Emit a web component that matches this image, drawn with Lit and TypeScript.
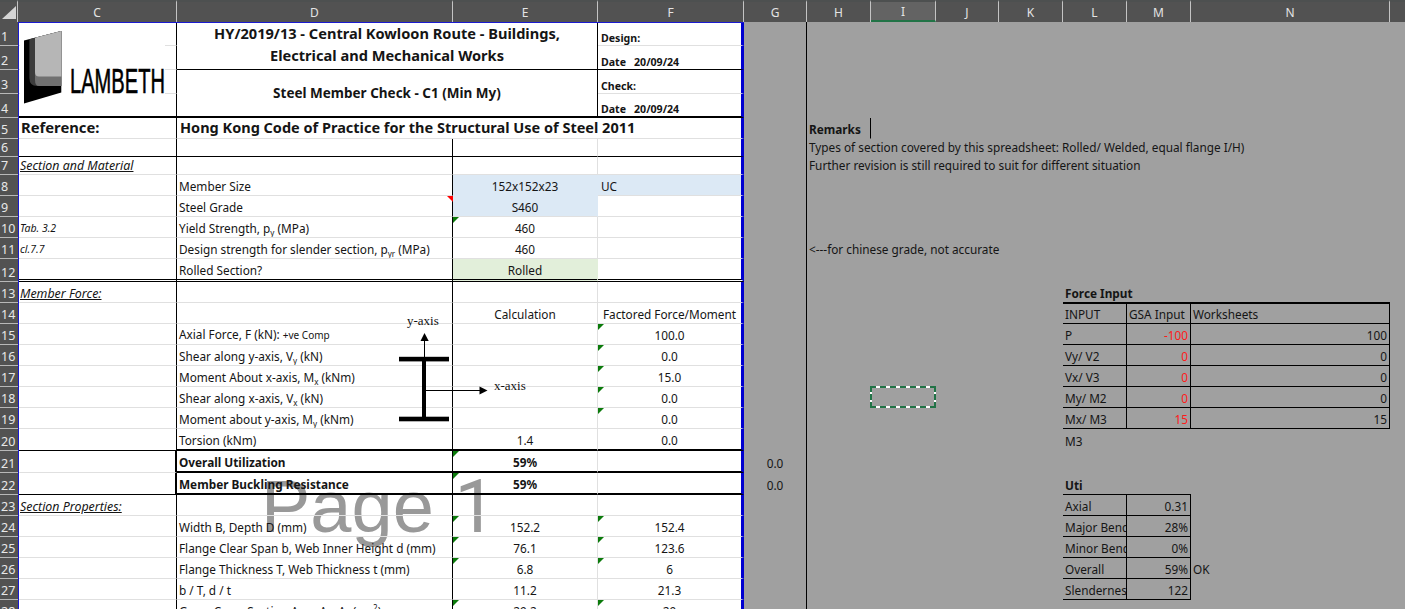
import {LitElement, css, html, nothing} from 'lit';
import {customElement} from 'lit/decorators.js';
import {classMap} from 'lit/directives/class-map.js';

const COLUMNS = ['C', 'D', 'E', 'F', 'G', 'H', 'I', 'J', 'K', 'L', 'M', 'N', ''];
const ROW_HEIGHTS = [24, 24, 24, 24, 21, 18, 18, 21, 21, 21, 21, 23, 21, 21, 21, 21, 21, 21, 21, 22, 22, 22, 21, 21, 21, 21, 21, 21];

// grid column line of a sheet column, the row header takes the first one
const colIndex = (col: string) => COLUMNS.indexOf(col) + 2;

interface Cell {
  col: string;
  row: number;
  colSpan?: number;
  rowSpan?: number;
  text?: unknown;
  cls?: string;
}

const sub = (t: string) => html`<sub>${t}</sub>`;

// borders of the print area, everything else keeps the light gridline
function printBorders(col: string, row: number): string {
  const out: string[] = [];
  if (col === 'C' || col === 'D') out.push('rb');
  if (col === 'F') out.push('blue');
  if (row === 6) out.push('bb');
  if (row === 12) out.push('dbl');
  if (col === 'C') {
    if (row === 4) out.push('bb2');
    if (row === 20 || row === 22) out.push('bb');
    if (row === 21 || row === 22) out.push('rb2');
  } else {
    if (row === 20 || row === 21 || row === 22) out.push('bb2');
  }
  if (col === 'F' && row === 2) out.push('bb');
  if (col === 'F' && row === 4) out.push('bb2');
  return out.join(' ');
}

const LABELS: Record<number, unknown> = {
  8: 'Member Size',
  9: 'Steel Grade',
  10: html`Yield Strength, p${sub('y')} (MPa)`,
  11: html`Design strength for slender section, p${sub('yr')} (MPa)`,
  12: 'Rolled Section?',
  15: html`Axial Force, F (kN): <small>+ve Comp</small>`,
  16: html`Shear along y-axis, V${sub('y')} (kN)`,
  17: html`Moment About x-axis, M${sub('x')} (kNm)`,
  18: html`Shear along x-axis, V${sub('x')} (kN)`,
  19: html`Moment about y-axis, M${sub('y')} (kNm)`,
  20: 'Torsion (kNm)',
  21: html`<b>Overall Utilization</b>`,
  22: html`<b>Member Buckling Resistance</b>`,
  24: 'Width B, Depth D (mm)',
  25: 'Flange Clear Span b, Web Inner Height d (mm)',
  26: 'Flange Thickness T, Web Thickness t (mm)',
  27: 'b / T, d / t',
  28: html`Gross Cross Section Area A${sub('g')}, A${sub('v')} (cm<sup>2</sup>)`,
};

const REFS: Record<number, unknown> = {
  7: html`<i class="sect">Section and Material</i>`,
  10: html`<i class="ref">Tab. 3.2</i>`,
  11: html`<i class="ref">cl.7.7</i>`,
  13: html`<i class="sect">Member Force:</i>`,
  23: html`<i class="sect">Section Properties:</i>`,
};

const E_VALUES: Record<number, unknown> = {
  8: '152x152x23', 9: 'S460', 10: '460', 11: '460', 12: 'Rolled',
  14: 'Calculation', 20: '1.4',
  21: html`<b>59%</b>`, 22: html`<b>59%</b>`,
  24: '152.2', 25: '76.1', 26: '6.8', 27: '11.2', 28: '29.2',
};

const F_VALUES: Record<number, unknown> = {
  14: 'Factored Force/Moment', 15: '100.0', 16: '0.0', 17: '15.0', 18: '0.0', 19: '0.0', 20: '0.0',
  24: '152.4', 25: '123.6', 26: '6', 27: '21.3', 28: '29',
};

const E_TRI = [10, 21, 22, 24, 25, 26, 28];
const F_TRI = [15, 16, 17, 18, 19, 24, 25, 26, 28];

function buildPrintCells(): Cell[] {
  const cells: Cell[] = [
    {col: 'D', row: 1, colSpan: 2, rowSpan: 2, cls: 'title bb rb', text: html`HY/2019/13 - Central Kowloon Route - Buildings,<br />Electrical and Mechanical Works`},
    {col: 'D', row: 3, colSpan: 2, rowSpan: 2, cls: 'subtitle bb2 rb', text: 'Steel Member Check - C1 (Min My)'},
    {col: 'F', row: 1, cls: 'small-bold', text: 'Design:'},
    {col: 'F', row: 2, cls: 'small-bold', text: html`Date<span class="date">20/09/24</span>`},
    {col: 'F', row: 3, cls: 'small-bold', text: 'Check:'},
    {col: 'F', row: 4, cls: 'small-bold', text: html`Date<span class="date">20/09/24</span>`},
    {col: 'D', row: 5, colSpan: 3, cls: 'heading blue', text: 'Hong Kong Code of Practice for the Structural Use of Steel 2011'},
  ];
  for (let row = 1; row <= 28; row++) {
    cells.push({col: 'C', row, text: row === 5 ? 'Reference:' : REFS[row], cls: row === 5 ? 'reference' : ''});
    if (row > 5) {
      cells.push({col: 'D', row, text: LABELS[row], cls: 'label'});
      const fill = row === 8 || row === 9 ? 'fill-blue' : row === 12 ? 'fill-green' : '';
      cells.push({col: 'E', row, text: E_VALUES[row], cls: `c ${fill} ${E_TRI.includes(row) ? 'tri' : ''} ${row === 8 ? 'no-bb' : ''}`});
      cells.push({col: 'F', row, text: row === 8 ? 'UC' : F_VALUES[row], cls: `${row === 8 ? 'fill-blue pad' : 'c'} ${F_TRI.includes(row) ? 'tri' : ''}`});
    }
  }
  return cells;
}

const sideCell = (col: string, row: number, text: unknown, cls = ''): Cell => ({col, row, text, cls: `side ${cls}`});

const FORCE_ROWS = [
  ['P', '-100', '100'],
  ['Vy/ V2', '0', '0'],
  ['Vx/ V3', '0', '0'],
  ['My/ M2', '0', '0'],
  ['Mx/ M3', '15', '15'],
];

const UTI_ROWS = [
  ['Axial', '0.31'],
  ['Major Bending', '28%'],
  ['Minor Bending', '0%'],
  ['Overall', '59%'],
  ['Slenderness', '122'],
];

function buildSideCells(): Cell[] {
  const cells: Cell[] = [
    sideCell('H', 5, html`<b>Remarks</b>`, 'rb'),
    {...sideCell('H', 6, 'Types of section covered by this spreadsheet: Rolled/ Welded, equal flange I/H)'), colSpan: 7},
    {...sideCell('H', 7, 'Further revision is still required to suit for different situation'), colSpan: 7},
    {...sideCell('H', 11, '<---for chinese grade, not accurate'), colSpan: 5},
    sideCell('G', 21, '0.0', 'c'),
    sideCell('G', 22, '0.0', 'c'),
    {...sideCell('L', 13, html`<b>Force Input</b>`), colSpan: 2},
    sideCell('L', 14, 'INPUT', 'box top-edge'),
    sideCell('M', 14, 'GSA Input', 'box top-edge'),
    sideCell('N', 14, 'Worksheets', 'box top-edge'),
    sideCell('L', 20, 'M3'),
    sideCell('L', 22, html`<b>Uti</b>`),
    sideCell('N', 26, 'OK'),
  ];
  FORCE_ROWS.forEach(([name, gsa, sheet], i) => {
    cells.push(sideCell('L', 15 + i, name, 'box'));
    cells.push(sideCell('M', 15 + i, gsa, 'box r red'));
    cells.push(sideCell('N', 15 + i, sheet, 'box r'));
  });
  UTI_ROWS.forEach(([name, value], i) => {
    cells.push(sideCell('L', 23 + i, name, 'box'));
    cells.push(sideCell('M', 23 + i, value, 'box r'));
  });
  return cells;
}

@customElement('app-root')
export class AppRoot extends LitElement {
  static styles = css`
    :host {
      display: block;
      width: 1405px;
      height: 609px;
      overflow: hidden;
      font-family: 'Noto Sans', 'Liberation Sans', sans-serif;
      font-size: 11.8px;
      color: #151515;
    }

    .sheet {
      position: relative;
      display: grid;
      grid-template-columns: 18px 159px 276px 145px 146px 63px 64px 65px 63px 64px 64px 64px 199px 1fr;
      background: #a0a0a0;
      width: 1405px;
    }

    .col-head,
    .corner {
      box-sizing: border-box;
      display: flex;
      align-items: center;
      justify-content: center;
      height: 22px;
      padding-top: 1px;
      background: #525252;
      border-top: 2px solid #4d5050;
      border-right: 1px solid #c4c4c4;
      color: #e4e4e4;
      font-size: 12px;
      z-index: 1;
    }

    .col-head.selected {
      background: #636363;
      border-bottom: 2px solid #217346;
    }

    .col-head.last {
      border-right: none;
    }

    .corner svg {
      display: block;
    }

    .row-head {
      box-sizing: border-box;
      display: flex;
      align-items: flex-end;
      grid-column: 1;
      padding: 0 0 1px 1px;
      background: #525252;
      border-bottom: 1px solid #b8b8b8;
      color: #e8e8e8;
      font-size: 12.5px;
      line-height: 15px;
      z-index: 1;
    }

    .print-area {
      position: relative;
      grid-column: 2 / 6;
      grid-row: 2 / 30;
      background: #fff;
      z-index: 0;
    }

    .print-frame {
      grid-column: 2 / 6;
      grid-row: 2 / 30;
      border-top: 1px solid #1a1ad0;
      border-left: 1px solid #1a1ad0;
      pointer-events: none;
      z-index: 2;
    }

    .watermark {
      position: absolute;
      left: 243px;
      top: 448px;
      font-family: 'Liberation Sans', Arial, sans-serif;
      font-size: 74px;
      line-height: 74px;
      color: #999;
      white-space: nowrap;
    }

    .watermark span {
      font-family: Roboto, 'Liberation Sans', sans-serif;
    }

    .cell {
      position: relative;
      box-sizing: border-box;
      display: flex;
      align-items: flex-end;
      min-width: 0;
      padding: 0 2px 1px 2px;
      border-right: 1px solid #e0e0e0;
      border-bottom: 1px solid #e0e0e0;
      line-height: 15px;
      white-space: nowrap;
      overflow: hidden;
      z-index: 1;
    }

    .cell.side {
      border-color: transparent;
    }

    .cell.c {
      justify-content: center;
    }

    .cell.r {
      justify-content: flex-end;
    }

    .cell.pad {
      padding-left: 3px;
    }

    .cell.rb {
      border-right-color: #000;
    }

    .cell.rb2 {
      border-right: 2px solid #000;
    }

    .cell.bb {
      border-bottom-color: #000;
    }

    .cell.bb2 {
      border-bottom: 2px solid #000;
    }

    .cell.dbl {
      border-bottom: 3px double #000;
    }

    .cell.blue {
      border-right: 3px solid #0000d0;
    }

    .cell.fill-blue {
      background: #dce9f5;
      border-right-color: #dce9f5;
    }

    .cell.fill-blue.blue {
      border-right-color: #0000d0;
    }

    .cell.no-bb {
      border-bottom-color: #dce9f5;
    }

    .cell.fill-green {
      background: #e2efda;
      border-right-color: #e2efda;
    }

    .cell.box {
      border-right: 1px solid #000;
      border-bottom: 1px solid #000;
    }

    .cell.top-edge {
      box-shadow: inset 0 1px 0 #000;
    }

    .red {
      color: #ff1a1a;
    }

    .cell.tri::before {
      content: '';
      position: absolute;
      top: 0;
      left: 0;
      border-top: 6px solid #0b7a0b;
      border-right: 6px solid transparent;
    }

    .comment {
      grid-column: 3;
      grid-row: 10;
      justify-self: end;
      align-self: start;
      width: 0;
      height: 0;
      border-top: 6px solid #ff0000;
      border-left: 6px solid transparent;
      z-index: 2;
    }

    .title {
      justify-content: center;
      align-items: center;
      padding-bottom: 3px;
      font-size: 14.6px;
      font-weight: 700;
      line-height: 22px;
      text-align: center;
    }

    .subtitle {
      justify-content: center;
      align-items: center;
      font-size: 13.5px;
      font-weight: 700;
      padding-top: 1px;
    }

    .small-bold {
      font-size: 10.6px;
      font-weight: 700;
      padding-left: 3px;
      padding-bottom: 0;
      line-height: 13px;
    }

    .date {
      margin-left: 8px;
    }

    .heading {
      padding-left: 3px;
      padding-bottom: 2px;
      font-size: 14.5px;
      font-weight: 700;
      line-height: 18px;
    }

    .reference {
      padding-left: 3px;
      padding-bottom: 2px;
      font-size: 14.8px;
      font-weight: 700;
      line-height: 18px;
    }

    .sect {
      font-size: 12.4px;
      text-decoration: underline;
    }

    .ref {
      font-size: 10.5px;
    }

    small {
      font-size: 10px;
    }

    sub,
    sup {
      font-size: 8px;
      line-height: 0;
    }

    .rule-print-edge {
      grid-column: 6;
      grid-row: 2 / 30;
      border-right: 1px solid #000;
      z-index: 1;
    }

    .rule-force-left {
      grid-column: 11;
      grid-row: 15 / 21;
      border-right: 1px solid #000;
      z-index: 1;
    }

    .rule-uti-left {
      grid-column: 11;
      grid-row: 24 / 29;
      border-right: 1px solid #000;
      z-index: 1;
    }

    .rule-force-top {
      grid-column: 11 / 14;
      grid-row: 14;
      border-bottom: 1px solid #000;
      z-index: 1;
    }

    .rule-uti-top {
      grid-column: 11 / 13;
      grid-row: 23;
      border-bottom: 1px solid #000;
      z-index: 1;
    }

    .beam {
      position: absolute;
      left: 395px;
      top: 310px;
      z-index: 3;
    }

    .logo {
      grid-column: 2;
      grid-row: 2 / 6;
      justify-self: start;
      align-self: start;
      margin: 1px 0 0 2px;
      width: 145px;
      height: 93px;
      background: #fff;
      z-index: 2;
    }

    .logo svg {
      display: block;
    }

    .marquee {
      box-sizing: border-box;
      grid-column: 8;
      grid-row: 19;
      margin: -1px 0 0 -1px;
      border: 2px dashed #217346;
      background: linear-gradient(#a0a0a0, #a0a0a0) padding-box, #fff border-box;
      z-index: 2;
    }
  `;

  renderCell(cell: Cell) {
    const column = colIndex(cell.col);
    const inPrintArea = !cell.cls?.includes('side');
    const extra = inPrintArea ? printBorders(cell.col, cell.row) : '';
    const classes: Record<string, boolean> = {cell: true};
    for (const name of `${cell.cls ?? ''} ${extra}`.split(' ')) {
      if (name) classes[name] = true;
    }
    const area = `grid-column:${column} / span ${cell.colSpan ?? 1};grid-row:${cell.row + 1} / span ${cell.rowSpan ?? 1}`;
    return html`<div class=${classMap(classes)} style=${area}>
      ${cell.text === undefined ? nothing : html`<span>${cell.text}</span>`}
    </div>`;
  }

  renderLogo() {
    return html`<div class="logo">
      <svg width="145" height="93" viewBox="20 23 145 93">
        <polygon points="24,40.5 61.3,31 61.3,92.5 24,103.5" fill="#000" />
        <path d="M29.4,39.2 L61.3,31 V86 H37 Q29.4,86 29.4,78 Z" fill="#3c3c3c" />
        <path d="M35,37.8 L61.3,31 V86 H39 Q35,86 35,80 Z" fill="#707070" />
        <path d="M35,37.8 L61.3,31 V76.6 H39 Q35,76.6 35,72 Z" fill="#b6b6b6" />
        <text x="70" y="92.6" textLength="95" lengthAdjust="spacingAndGlyphs" font-family="Liberation Sans" font-size="35" fill="#000" stroke="#000" stroke-width="0.6">LAMBETH</text>
      </svg>
    </div>`;
  }

  renderBeam() {
    return html`<svg class="beam" width="140" height="115" viewBox="395 310 140 115">
      <rect x="399" y="356.8" width="50" height="4.6" fill="#000" />
      <rect x="399" y="416.7" width="50" height="4.6" fill="#000" />
      <rect x="422" y="361" width="4" height="56" fill="#000" />
      <line x1="424.5" y1="358" x2="424.5" y2="340" stroke="#000" />
      <polygon points="424.5,333 428.7,341 420.5,341" fill="#000" />
      <line x1="426" y1="390.5" x2="480" y2="390.5" stroke="#000" />
      <polygon points="487.5,390.5 479.5,386.5 479.5,394.5" fill="#000" />
      <text x="407" y="325" font-family="Liberation Serif" font-size="13" fill="#111">y-axis</text>
      <text x="494" y="390" font-family="Liberation Serif" font-size="13" fill="#111">x-axis</text>
    </svg>`;
  }

  render() {
    const rows = ROW_HEIGHTS.map((h) => `${h}px`).join(' ');
    return html`<div class="sheet" style="grid-template-rows:22px ${rows}">
      <div class="corner">
        <svg width="14" height="13" viewBox="0 0 14 13"><polygon points="0,13 14,13 14,0" fill="#d4d4d4" /></svg>
      </div>
      ${COLUMNS.map(
        (col) =>
          html`<div
            class=${classMap({'col-head': true, selected: col === 'I', last: col === ''})}
          >
            ${col}
          </div>`
      )}
      ${ROW_HEIGHTS.map(
        (_h, i) => html`<div class="row-head" style="grid-row:${i + 2}">${i + 1}</div>`
      )}
      <div class="print-area"><div class="watermark">Page <span>1</span></div></div>
      ${buildPrintCells().map((cell) => this.renderCell(cell))}
      ${buildSideCells().map((cell) => this.renderCell(cell))}
      <div class="rule-print-edge"></div>
      <div class="rule-force-left"></div>
      <div class="rule-uti-left"></div>
      <div class="rule-force-top"></div>
      <div class="rule-uti-top"></div>
      <div class="print-frame"></div>
      <div class="comment"></div>
      <div class="marquee"></div>
      ${this.renderLogo()} ${this.renderBeam()}
    </div>`;
  }
}
